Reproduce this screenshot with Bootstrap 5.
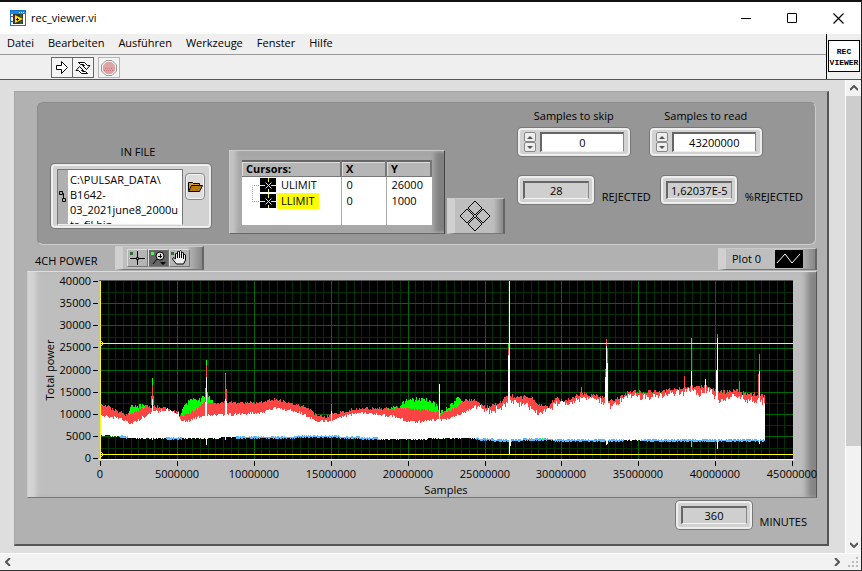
<!DOCTYPE html>
<html lang="de">
<head>
<meta charset="utf-8">
<meta name="viewport" content="width=device-width, initial-scale=1">
<title>rec_viewer.vi</title>
<link rel="stylesheet" href="https://cdn.jsdelivr.net/npm/bootstrap@5.3.0/dist/css/bootstrap.min.css">
<style>
body{font:12px/16px "Open Sans","Noto Sans",sans-serif;color:#000;background:#dedede}
.ui-text{font-size:11px}
svg{display:block;flex:none}
.app{min-height:100vh;border-top:2px solid #111;border-right:1px solid #222;border-bottom:1px solid #333}
.titlebar{height:32px;background:#fff;padding-left:10px}
.titlebar .title{margin-left:5px}
.titlebar button{width:46px;height:32px;background:none;border:0;display:flex;align-items:center;justify-content:center;padding:0}
.head{background:#efefef;border-bottom:1px solid #555}
.menus{height:21px;border-bottom:1px solid #999;padding:0 0 2px 7px;gap:14px}
.menus a{color:#000;text-decoration:none}
.tools{height:24px;padding:2px 0 0 51px}
.tools button{width:22px;height:21px;border:1px solid #666;background:#f4f4f4;padding:0;display:flex;align-items:center;justify-content:center}
.tools button+button{width:21px;border-left:0}
.tools button.abort{width:22px;border:1px solid #b5b5b5;margin-left:4px}
.viicon{width:35px;border-left:1px solid #000;padding:6px 1px 7px 1px}
.viicon div{width:32px;height:32px;border:1px solid #000;background:#fff;font:bold 8px/11px "Liberation Mono",monospace;padding-top:5px;text-align:center;white-space:nowrap}
.work{padding:11px 16px 7px 14px}
.panel{background:#b1b1b1;border:1px solid #a5a5a5;border-right:2px solid #555;border-bottom:2px solid #555;padding:10px 10px 14px 12px}
.group{background:#969696;border-radius:6px;border:1px solid #8c8c8c;border-right-color:#ccc;border-bottom-color:#ccc;margin:0 1px 0 10px;padding:5px 52px 0 13px;height:143px}
.shell{background:#d2d2d2;border:2px solid #eee;border-radius:4px;box-shadow:0 0 0 1px #777}
.infile{padding-top:36px}
.infile label{margin-bottom:4px;padding-left:14px}
.pathbox{width:160px;height:64px;padding:3px 4px}
.pathbox .field{border:1px solid #777;border-bottom-color:#eee;background:#b0b0b0;width:126px;height:56px}
.pathbox textarea{flex:1;min-width:0;height:54px;border:0;background:#fff;resize:none;overflow:hidden;padding:2px 0 0 2px;line-height:15px;font-size:11px;word-break:break-all;outline:0}
.folder{width:20px;height:27px;background:#ddd;border:1px solid #888;border-radius:4px;padding:0;display:flex;align-items:center;justify-content:center;box-shadow:inset 0 0 0 1px #f4f4f4}
.bevel{border-style:solid;border-color:#cacaca #666 #777 #d0d0d0;border-width:1px 2px 1px 8px;background:linear-gradient(90deg,#bebebe 80%,#888)}
.low{margin-top:auto;margin-bottom:10px}
.cursors{width:216px;height:84px;background:#a8a8a8;border:1px solid;border-color:#ccc #444 #666 #ccc;padding:9px 12px 9px 12px;margin-left:18px;box-shadow:inset 6px 0 4px #c4c4c4,inset -9px 0 5px #808080}
.cursors table{width:100%;height:64px;table-layout:fixed;background:#fff;border-collapse:collapse;font-size:11px;line-height:16px;border-top:2px solid #666}
.cursors th{height:14px;background:#b6b6b6;border-right:2px solid #777;border-bottom:1px solid #777;box-shadow:inset 1px 1px #ddd;padding:0 4px;line-height:14px}
.cursors th:nth-child(1){width:99px}
.cursors th:nth-child(2){width:45px}
.cursors td{padding:0 5px;border-right:1px solid #aaa;height:16px}
.cursors td:last-child{border-right:0}
.pick{background:#ff0}
.pad{width:58px;height:36px;margin-left:2px;padding-right:9px}
.num{width:112px;height:28px;padding:3px 4px}
.num input{flex:1;min-width:0;height:20px;border:1px solid #666;border-color:#666 #888 #eee #666;border-width:2px 1px 1px 2px;background:#fff;text-align:center;padding:0;font-size:11px;outline:0}
.num .steps button{display:block;width:12px;height:10px;padding:0;border:1px solid #888;border-radius:2px;background:#eee}
.num .steps svg{margin:auto}
.second{margin-left:20px}
.ind{width:76px;height:28px;padding:3px}
.ind output{display:block;height:18px;border:1px solid #666;border-width:2px 1px 1px 2px;border-right-color:#888;border-bottom-color:#f4f4f4;background:#cfcfcf;text-align:center;line-height:16px}
.results{margin:20px -50px 0 0}
.cap{margin:13px 10px 0 8px;white-space:nowrap}
.strip{height:26px;padding-left:8px}
.palette{width:89px;height:24px;margin:1px 0 0 18px}
.palette button{width:21px;height:18px;padding:0;border:1px solid;border-color:#ddd #777 #777 #ddd;background:#b4b4b4}
.palette button.on{background:#666}
.legend{width:99px;height:22px;margin-top:3px;padding:0 12px 0 6px}
.graph{background:#bebebe;border:1px solid;border-color:#ddd #555 #777 #ccc;box-shadow:inset 10px 0 5px -2px #d4d4d4,inset -12px 0 6px -3px #858585}
.graph svg{width:100%;height:auto;overflow:visible}
.foot{padding:3px 0 0}
.vbar{width:16px;background:#f2f2f2;border-left:1px solid #fff}
.vbar button,.hbar button{width:16px;height:16px;background:none;border:0;padding:0;display:flex;align-items:center;justify-content:center}
.thumb{height:350px;background:#cdcdcd}
.hbar{height:17px;background:#f2f2f2;border-top:1px solid #fff}
</style>
<script src="https://cdn.jsdelivr.net/npm/bootstrap@5.3.0/dist/js/bootstrap.bundle.min.js"></script>
</head>
<body>
<div class="app d-flex flex-column">
<header>
<div class="titlebar d-flex align-items-center">
<svg width="16" height="16"><rect x=".5" y=".5" width="15" height="15" fill="#fff" stroke="#1874c8"/><path fill="#1c86e0" d="M1 1h14v3H1z"/><path stroke="#fff" stroke-dasharray="1 1" d="M9 2.500h5"/><path fill="#333" d="M3 4h10v10H3z"/><path fill="#fd0" d="M5 5l8 4-8 4z"/><path stroke="#24a040" d="M11 4v4M11 11v3"/><path stroke="#c22" d="M1 6.500h3M1 11.500h3"/><path stroke="#111" d="M6 9.500h3M7.500 8v3"/></svg>
<span class="title ui-text flex-grow-1">rec_viewer.vi</span>
<button aria-label="Minimieren"><svg width="10" height="10"><path stroke="#000" d="M0 5.500h10"/></svg></button>
<button aria-label="Maximieren"><svg width="10" height="10"><path fill="none" stroke="#000" d="M.5.5h9v9h-9z"/></svg></button>
<button aria-label="Schließen"><svg width="11" height="11"><path stroke="#000" stroke-width="1.200" d="M.5.5l10 10M10.500.5l-10 10"/></svg></button>
</div>
<div class="head d-flex">
<div class="flex-grow-1">
<nav class="menus d-flex align-items-center ui-text"><a href="#">Datei</a><a href="#">Bearbeiten</a><a href="#">Ausführen</a><a href="#">Werkzeuge</a><a href="#">Fenster</a><a href="#">Hilfe</a></nav>
<div class="tools d-flex">
<button aria-label="Ausführen"><svg width="12" height="13"><path fill="#fff" stroke="#000" d="M.5 4.500h5v-4l6 6-6 6v-4h-5z"/></svg></button>
<button aria-label="Wiederholt ausführen"><svg width="16" height="14" fill="#fff" stroke="#000"><path d="M3.500 1.500h6l3 3h2.500l-3.500 4-4-4h2l-1-1h-3z"/><path d="M12.500 12.500h-6l-3-3H1l3.500-4 4 4h-2l1 1h3z"/></svg></button>
<button class="abort" aria-label="Abbrechen"><svg width="16" height="16"><path fill="#eee" stroke="#999" d="M5 .5h6L15.500 5v6L11 15.500H5L.5 11V5z"/><path fill="#dea3a3" d="M5.500 2h5L14 5.500v5L10.500 14h-5L2 10.500v-5z"/><path stroke="#c77" stroke-dasharray="1 1" d="M4 8.500h8M3 10.500h10"/></svg></button>
</div></div>
<div class="viicon"><div>REC<br>VIEWER</div></div>
</div>
</header>
<div class="d-flex flex-grow-1">
<main class="work flex-grow-1">
<div class="panel">
<section class="group d-flex">
<div class="infile">
<label class="ui-text d-block text-center" for="path">IN FILE</label>
<div class="shell pathbox d-flex justify-content-between">
<div class="field d-flex align-items-center"><svg width="10" height="14" class="flex-shrink-0" fill="none" stroke="#000"><path d="M1.500 1.500h3v3h-3zM4.500 8.500h3v3h-3zM4.500 3.500h1v5"/></svg><textarea id="path" spellcheck="false">C:\PULSAR_DATA\
B1642-
03_2021june8_2000u
ts_fil.bin</textarea></div>
<button class="folder mt-1" aria-label="Durchsuchen"><svg width="15" height="11"><path fill="#d99a1c" stroke="#000" d="M.5 9.500v-8h4l1 1h6v2"/><path fill="#b87808" stroke="#000" d="M.5 10.500l3-6h11l-3 6z"/></svg></button>
</div></div>
<div class="cursors low"><table>
<thead><tr><th>Cursors:</th><th>X</th><th>Y</th></tr></thead>
<tbody><tr><td><div class="d-flex"><svg width="30" height="16"><path stroke="#aaa" fill="none" stroke-dasharray="1 1" d="M12 8.500H5.500V16"/><path d="M13 1h16v14H13z"/><path stroke="#ff0" d="M13 8.500h5M24 8.500h5M21.500 1v4M21.500 12v3M18.500 5.500l6 6M24.500 5.500l-6 6"/></svg><span class="px-1">ULIMIT</span></div></td><td>0</td><td>26000</td></tr>
<tr><td><div class="d-flex"><svg width="30" height="16"><path stroke="#aaa" fill="none" stroke-dasharray="1 1" d="M12 8.500H5.500V0"/><path d="M13 1h16v14H13z"/><path stroke="#ff0" d="M13 8.500h5M24 8.500h5M21.500 1v4M21.500 12v3M18.500 5.500l6 6M24.500 5.500l-6 6"/></svg><span class="px-1 pick">LLIMIT</span></div></td><td>0</td><td>1000</td></tr>
<tr><td></td><td></td><td></td></tr></tbody></table></div>
<div class="bevel pad low d-flex align-items-center justify-content-center"><svg width="32" height="32" fill="none" stroke="#000"><path d="M16 1l7 7-7 7-7-7zM16 17l7 7-7 7-7-7zM8 9l7 7-7 7-7-7zM24 9l7 7-7 7-7-7z"/></svg></div>
<div class="ms-auto ui-text">
<div class="d-flex">
<div><label class="d-block text-center mb-1" for="skip">Samples to skip</label><div class="shell num d-flex gap-1 align-items-center"><span class="steps"><button aria-label="Mehr"><svg width="6" height="3"><path fill="#555" d="M0 3l3-3 3 3z"/></svg></button><button aria-label="Weniger"><svg width="6" height="3"><path fill="#555" d="M0 0l3 3 3-3z"/></svg></button></span><input id="skip" value="0"></div></div>
<div class="second"><label class="d-block text-center mb-1" for="read">Samples to read</label><div class="shell num d-flex gap-1 align-items-center"><span class="steps"><button aria-label="Mehr"><svg width="6" height="3"><path fill="#555" d="M0 3l3-3 3 3z"/></svg></button><button aria-label="Weniger"><svg width="6" height="3"><path fill="#555" d="M0 0l3 3 3-3z"/></svg></button></span><input id="read" value="43200000"></div></div>
</div>
<div class="d-flex results"><div class="shell ind"><output id="rej">28</output></div><label class="cap" for="rej">REJECTED</label><div class="shell ind"><output id="prej">1,62037E-5</output></div><label class="cap" for="prej">%REJECTED</label></div>
</div>
</section>
<div class="strip d-flex">
<span class="ui-text pt-2">4CH POWER</span>
<div class="bevel palette d-flex align-items-center ps-1">
<button aria-label="Cursor"><svg width="18" height="16"><path fill="#363" d="M2 2h3v3H2z"/><path stroke="#000" d="M2 8.500h6M11 8.500h6M9.500 1v6M9.500 10v5"/><path fill="none" stroke="#000" d="M8.500 7.500h2v2h-2z"/></svg></button>
<button class="on" aria-label="Zoom"><svg width="18" height="16"><path fill="#4f4" d="M2 2h3v3H2z"/><circle cx="11" cy="6" r="4" fill="#ddd" stroke="#000"/><path stroke="#000" d="M9 6.500h4M11.500 4v4M8 9l-4 5"/><path d="M11 12h6l-3 3z"/></svg></button>
<button aria-label="Verschieben"><svg width="18" height="16"><path fill="#363" d="M1 2h3v3H1z"/><path fill="#eee" stroke="#000" d="M6.500 14l-4-5 1-1.500 2 1.500V4l1-1 1 1V2l1-1 1 1V1.500l1-1 1 1V3l1-1 1 1v2l1-1 1 1v5l-2 4z"/><path stroke="#000" d="M7.500 4v4M9.500 2v6M11.500 3v5M13.500 5v4"/></svg></button>
</div>
<div class="bevel legend ms-auto d-flex align-items-center justify-content-between ui-text"><span>Plot 0</span><svg width="28" height="18"><path d="M0 0h28v18H0z"/><path fill="none" stroke="#fff" d="M2 13l8-9 7 9 8-9"/></svg></div>
</div>
<div class="graph"><svg id="chart" viewBox="28 272 788 225" role="img" aria-label="Total power / Samples" font-size="11"></svg></div>
<div class="d-flex justify-content-end foot ui-text"><div class="shell ind"><output id="min">360</output></div><label class="cap" for="min">MINUTES</label></div>
</div>
</main>
<aside class="vbar d-flex flex-column"><button aria-label="Nach oben"><svg width="8" height="6"><path fill="none" stroke="#555" stroke-width="2" d="M0 5l4-4 4 4"/></svg></button><div class="thumb"></div><button class="mt-auto" aria-label="Nach unten"><svg width="8" height="6"><path fill="none" stroke="#555" stroke-width="2" d="M0 1l4 4 4-4"/></svg></button></aside>
</div>
<footer class="hbar d-flex justify-content-between"><button aria-label="Nach links"><svg width="6" height="8"><path fill="none" stroke="#555" stroke-width="2" d="M5 0L1 4l4 4"/></svg></button><div class="d-flex"><button aria-label="Nach rechts"><svg width="6" height="8"><path fill="none" stroke="#555" stroke-width="2" d="M1 0l4 4-4 4"/></svg></button><svg width="16" height="16" fill="#bbb"><path d="M11 3h2v2h-2zM11 7h2v2h-2zM11 11h2v2h-2zM7 7h2v2H7zM7 11h2v2H7zM3 11h2v2H3z"/></svg></div></footer>
</div>
<script>
const K = {
 red:[100,405,108,407,113,411,120,412,124,416,130,414,138,411,145,407,155,407,165,408,172,411,178,413,180,417,190,413,197,409,205,403,215,403,235,403,245,403,260,403,275,400,290,403,300,406,310,409,315,415,325,418,331,415,340,413,352,410,365,409,380,409,400,409,430,411,440,414,450,411,458,407,463,401,475,400,485,407,490,407,500,402,505,397,512,396,530,397,538,405,548,406,555,398,562,401,570,399,582,393,590,395,600,397,606,400,614,401,620,397,630,391,640,392,660,391,670,390,680,388,690,386,700,387,710,387,718,392,725,392,735,390,745,394,765,395],
 green:[100,406,124,420,128,416,130,407,145,406,150,412,180,417,184,407,190,401,200,400,206,395,212,402,218,409,300,409,312,424,340,422,380,412,397,408,405,402,418,399,430,401,435,405,440,413,447,409,455,401,458,396,462,403,466,415,765,415],
 white:[100,415,110,418,115,418,120,419,125,421,130,424,136,422,142,418,150,414,155,412,162,411,168,410,172,412,178,413,180,420,187,422,195,418,205,416,225,415,250,414,260,413,275,409,290,411,300,413,310,419,318,422,332,421,345,416,360,413,380,415,395,417,405,421,412,422,430,421,445,420,455,417,465,412,475,407,483,410,490,412,500,407,508,402,515,402,530,408,538,412,548,408,555,403,565,404,580,398,595,398,605,404,612,407,620,400,630,395,645,397,660,395,680,392,690,390,700,393,710,390,717,400,725,400,735,393,745,400,765,402],
 base:[100,435,120,436,130,438,180,438,260,437,330,436,370,438,385,439,470,438,500,440,545,439,560,440,765,440]
};
const at = (a,x) => { for(let i=0;i<a.length-2;i+=2) if(x<=a[i+2]) return a[i+1]+(a[i+3]-a[i+1])*(x-a[i])/(a[i+2]-a[i]); return a[a.length-1]; };
let seed = 11;
const rnd = () => (seed = (seed*16807)%2147483647)/2147483647;
const col = (x,a,b) => b>a ? `M${x} ${Math.round(a)}h1V${Math.round(b)}h-1z` : '';
let g='',r='',w='',c='',g2='';
for(let x=100;x<765;x++){
  const late = x>475, j = late ? 4 : 3;
  const rt = at(K.red,x)-rnd()*j+(late?2:1), wt = at(K.white,x)-rnd()*j+(late?rnd()*5:1), gt = at(K.green,x)-rnd()*5+2, b = at(K.base,x);
  r += col(x,rt,b); g += col(x,gt,rt);
  w += col(x,Math.max(wt,rt),b+(rnd()>.7?1:0));
  if((x>118&&x<128)||(x>165&&x<182)||(x>235&&x<380)||(x>475&&x<624)||x>640) c += col(x,b-(rnd()>.5?1:0),b+1+(rnd()>.5?1:0));
  if(x>505&&rnd()>.8) g2 += col(x,b-1,b);
}
const spikes=[['#0f0',152,378,385],['#f44',152,385,400],['#fff',152,399,440],['#f44',151,396,405],['#f44',153,396,405],
 ['#0f0',206,360,366],['#f44',206,366,377],['#fff',206,377,445],['#0f0',205,388,394],['#f44',205,394,405],['#fff',205,402,438],['#0f0',207,392,401],
 ['#0f0',225,373,374],['#f44',225,374,399],['#fff',225,399,440],['#f44',226,389,402],['#fff',226,401,437],['#f44',331,404,411],['#fff',331,411,421],
 ['#fff',439,384,439],['#0f0',508,344,347],['#f44',508,347,355],['#fff',508,355,440],['#fff',509,281,455],['#fff',510,400,446],
 ['#f44',581,387,398],['#f44',606,339,346],['#fff',606,346,445],['#f44',605,369,377],['#fff',605,377,438],['#f44',607,348,363],['#fff',607,363,444],
 ['#f44',684,376,392],['#5bf',691,338,343],['#0f0',691,343,349],['#f44',691,349,371],['#fff',691,371,440],['#5bf',691,442,447],['#fff',705,379,400],
 ['#f44',717,334,338],['#fff',717,338,449],['#fff',716,370,440],['#f44',739,381,396],['#f44',759,354,371],['#fff',759,371,444],['#f44',758,374,396]];
let s='<rect x="99" y="280" width="694" height="1" fill="#555"/><rect x="100" y="281" width="693" height="178"/><rect x="99" y="459" width="695" height="1" fill="#fff"/><g shape-rendering="crispEdges">';
for(let i=1;i<90;i++) if(i%10) { const x=Math.round(100+i*7.69); s+=`<path fill="#033003" d="M${x} 281h1v178h-1z"/>`; }
for(let i=1;i<16;i++){ const y=Math.round(281+i*11.1); s+=`<path fill="${i%2?'#033003':'#006800'}" d="M100 ${y}h693v1H100z"/>`; }
for(let i=1;i<9;i++) s+=`<path fill="#006800" d="M${Math.round(100+i*76.9)} 281h1v178h-1z"/>`;
s+=`<path fill="#0f0" d="${g}"/><path fill="#f44" d="${r}"/><path fill="#fff" d="${w}"/><path fill="#5bf" d="${c}"/><path fill="#0f0" d="${g2}"/>`;
for(const [f,x,a,b] of spikes) s+=`<path fill="${f}" d="${col(x,a,b)}"/>`;
s+='<path fill="#ff0" d="M100 343h693v1H100zM100 454h693v1H100zM100 281h1v178h-1z"/><path stroke="#ff0" d="M101 341l2 2M101 346l2-2M101 452l2 2M101 457l2-2"/>';
for(let i=0;i<9;i++) s+=`<path d="M93 ${Math.round(281+i*22.15)}h5v1h-5z"/>`;
for(let i=0;i<10;i++) s+=`<path d="M${Math.round(100+i*76.9)} 461h1v5h-1z"/>`;
s+='</g>';
for(let i=0;i<9;i++) s+=`<text x="91" y="${Math.round(285+i*22.15)}" text-anchor="end">${40000-i*5000}</text>`;
for(let i=0;i<10;i++) s+=`<text x="${Math.round(100+i*76.9)}" y="478" text-anchor="middle">${i*5000000}</text>`;
s+='<text x="446" y="494" text-anchor="middle">Samples</text><text transform="translate(54 370) rotate(-90)" text-anchor="middle">Total power</text>';
document.getElementById('chart').innerHTML=s;
</script>
</body>
</html>
